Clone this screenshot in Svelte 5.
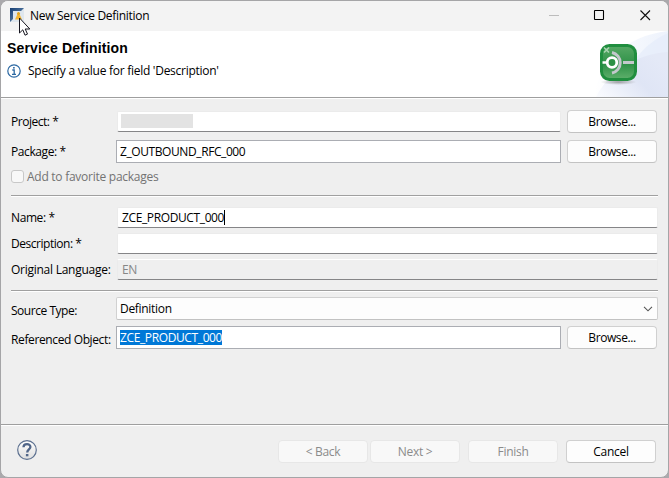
<script>
  const actions = [
    { label: '< Back', disabled: true, gap: 0 },
    { label: 'Next >', disabled: true, gap: 2 },
    { label: 'Finish', disabled: true, gap: 8 },
    { label: 'Cancel', disabled: false, gap: 8 }
  ];
</script>

<div class="desktop">
  <div class="window">
    <header class="titlebar">
      <svg class="appicon" width="14" height="14" viewBox="0 0 14 14">
        <defs>
          <linearGradient id="blue" x1="0" y1="0" x2="1" y2="1">
            <stop offset="0" stop-color="#173f73" /><stop offset="1" stop-color="#7597bb" />
          </linearGradient>
        </defs>
        <rect width="14" height="14" fill="#dfe7ee" />
        <path d="M0 0H14L11 3H3V11L0 14Z" fill="url(#blue)" />
        <path d="M8.5 4 5 11.5H12Z" fill="#f5b735" />
        <circle cx="8.5" cy="5.5" r="1.5" fill="#e5a51f" />
      </svg>
      <span class="title">New Service Definition</span>
      <svg class="controls" width="130" height="30" viewBox="0 0 130 30">
        <path d="M11 14.5h10" stroke="#bcbcbc" fill="none" />
        <rect x="56.5" y="9.5" width="9" height="9" rx="0.5" fill="none" stroke="#000" stroke-width="1.1" />
        <path d="m102.5 9.5 9.5 9.5m0-9.5-9.5 9.5" stroke="#111" stroke-width="1.1" fill="none" />
      </svg>
      <svg class="cursor" width="14" height="20" viewBox="0 0 14 20">
        <path d="M2.5 1v15l3.3-3.2 2.2 5.4 2.5-1.1-2.3-5.1h4.6Z" fill="#fff" stroke="#161620" />
      </svg>
    </header>

    <section class="banner">
      <svg class="swoosh" width="74" height="66" viewBox="0 0 74 66">
        <defs>
          <linearGradient id="sw" x1="0" x2="1"><stop offset="0" stop-color="#fff" /><stop offset="1" stop-color="#edf2fc" /></linearGradient>
          <linearGradient id="sw2" x1="0" x2="1" y1="1" y2=".4"><stop offset="0" stop-color="#fbfcff" /><stop offset=".6" stop-color="#dfe5f5" /><stop offset="1" stop-color="#e4e9f7" /></linearGradient>
        </defs>
        <path d="M0 66C5 32 30 5 74 0V66Z" fill="url(#sw)" />
        <path d="M28 66C30 40 46 14 74 2V66Z" fill="#e3ebfa" opacity=".65" />
        <path d="M2 66C14 42 41 23 74 21V66Z" fill="url(#sw2)" />
      </svg>
      <svg class="badge" width="40" height="44" viewBox="-.5 -.5 40 44">
        <defs>
          <linearGradient id="green" x1="0" y1="0" x2="0" y2="1">
            <stop offset="0" stop-color="#57a965" /><stop offset=".55" stop-color="#2f9148" /><stop offset="1" stop-color="#5fb06c" />
          </linearGradient>
          <radialGradient id="shade"><stop offset="0" stop-color="#777" stop-opacity=".7" /><stop offset="1" stop-color="#888" stop-opacity="0" /></radialGradient>
        </defs>
        <ellipse cx="19" cy="38.5" rx="18" ry="3" fill="url(#shade)" />
        <rect x="2" y="2" width="34" height="34" rx="8" fill="url(#green)" stroke="#208e3f" stroke-width="3" />
        <path d="M12.5 9A10.5 10.5 0 0 1 12.5 29.5M23.5 19H34.5" fill="none" stroke="#c3c8cc" stroke-width="3" />
        <path d="M3 19h5" stroke="#fff" stroke-width="2.5" />
        <circle cx="12.5" cy="19" r="4.8" fill="#2d9145" stroke="#fff" stroke-width="2.8" />
        <path d="m4.5 4 5 5m0-5-5 5" stroke="#a9d3b1" stroke-width="1.6" />
      </svg>
      <h1>Service Definition</h1>
      <p>
        <svg width="14" height="14" viewBox="0 0 14 14">
          <circle cx="7" cy="7" r="6.2" fill="#fff" stroke="#2b68a2" stroke-width="1.2" />
          <path d="M5.3 6h1.9v4.2M5 10.4h4" fill="none" stroke="#2b68a2" stroke-width="1.3" />
          <rect x="6.1" y="3" width="1.6" height="1.6" fill="#2b68a2" />
        </svg>
        <span class="hint">Specify a value for field 'Description'</span>
      </p>
    </section>

    <main>
      <div class="row project">
        <span class="label tight">Project: *</span>
        <div class="field flat"><i class="redacted"></i></div>
        <div class="button">Browse...</div>
      </div>
      <div class="row package">
        <span class="label">Package: *</span>
        <div class="field boxed"><span class="pkg">Z_OUTBOUND_RFC_000</span></div>
        <div class="button">Browse...</div>
      </div>
      <div class="favorite"><i class="check"></i><span>Add to favorite packages</span></div>
      <div class="rule"></div>
      <div class="row name">
        <span class="label">Name: *</span>
        <div class="field flat"><span class="zce">ZCE_PRODUCT_000</span><i class="caret"></i></div>
      </div>
      <div class="row">
        <span class="label tight">Description: *</span>
        <div class="field flat"></div>
      </div>
      <div class="row">
        <span class="label language">Original Language:</span>
        <div class="field flat readonly"><span>EN</span></div>
      </div>
      <div class="rule second"></div>
      <div class="row source">
        <span class="label low tight">Source Type:</span>
        <div class="field combo">
          <span class="choice">Definition</span>
          <svg width="10" height="6" viewBox="0 0 10 6"><path d="m1 .8 4 4 4-4" fill="none" stroke="#555" stroke-width="1.1" /></svg>
        </div>
      </div>
      <div class="row ref">
        <span class="label low object">Referenced Object:</span>
        <div class="field boxed"><span class="zce selected">ZCE_PRODUCT_000</span></div>
        <div class="button">Browse...</div>
      </div>
    </main>

    <footer>
      <svg class="help" width="20" height="20" viewBox="0 0 20 20">
        <defs><linearGradient id="hg" x1="0" y1="0" x2="0" y2="1"><stop offset="0" stop-color="#fff" /><stop offset="1" stop-color="#dedede" /></linearGradient></defs>
        <circle cx="10" cy="10" r="9.3" fill="url(#hg)" stroke="#5c7090" stroke-width="1.2" />
        <path d="M6.5 7.2C6.5 3 13.6 3.2 13.4 7c-.1 2.3-3.2 2.6-3.2 5.4" fill="none" stroke="#516689" stroke-width="2.3" />
        <rect x="8.9" y="14" width="2.5" height="2.3" fill="#516689" />
      </svg>
      <div class="actions">
        {#each actions as a}
          <div class="button" class:disabled={a.disabled} style:margin-left="{a.gap}px">{a.label}</div>
        {/each}
      </div>
    </footer>
  </div>
</div>

<style>
  :global(body) { margin: 0; overflow: hidden; }
  .desktop { width: 669px; height: 478px; background: #aaa9ac; }
  .window {
    box-sizing: border-box; width: 669px; height: 478px; overflow: hidden;
    border: 1px solid #a5a5a7; border-radius: 8px; background: #efefef;
    display: flex; flex-direction: column; color: #000;
    font: 12px/16px "Open Sans", "Noto Sans", sans-serif; letter-spacing: -0.3px; white-space: nowrap;
  }
  .titlebar { position: relative; height: 30px; flex: none; display: flex; background: #f3f3f3; }
  .appicon { margin: 7px 0 0 9px; }
  .title { margin: 7px 0 0 6px; }
  .controls { margin-left: auto; }
  .cursor { position: absolute; left: 16px; top: 16px; z-index: 2; }
  .banner { position: relative; height: 66px; flex: none; background: #fff; border-bottom: 1px solid #9f9f9f; box-shadow: 0 1px #fff; }
  .swoosh { position: absolute; right: 0; top: 0; }
  .badge { position: absolute; right: 29px; top: 12px; }
  h1 { margin: 0; padding: 9px 0 0 6px; font: bold 14px/16px "Liberation Sans", Arial, sans-serif; letter-spacing: 0.15px; }
  .banner p { display: flex; gap: 7px; margin: 7px 0 0 6px; align-items: center; height: 16px; }
  .hint { letter-spacing: -0.27px; }
  main { flex: none; height: 326px; box-sizing: border-box; padding: 12px 10px 0; display: flex; flex-direction: column; }
  .row { display: flex; align-items: center; height: 23px; flex: none; margin-bottom: 3px; }
  .label { width: 105px; flex: none; line-height: 16px; letter-spacing: -0.4px; }
  .tight { letter-spacing: -0.47px; }
  .language { letter-spacing: -0.26px; }
  .object { letter-spacing: -0.38px; }
  .low { padding-top: 5px; }
  .field { box-sizing: border-box; flex: 1; height: 23px; display: flex; align-items: center; }
  .flat { height: 21px; margin: 0 0 0 1px; padding-left: 4px; background: #fff; border: 1px solid #ebebeb; border-bottom-color: #858587; border-radius: 2px; }
  .boxed { padding-left: 3px; background: #fff; border: 1px solid #abadb3; }
  .pkg { letter-spacing: -0.41px; }
  .zce { letter-spacing: -0.38px; }
  .readonly { background: #efefef; border-top-color: #fff; color: #878787; }
  .button {
    box-sizing: border-box; width: 90px; height: 23px; flex: none; border: 1px solid #d0d0d0;
    border-bottom-color: #c3c3c3; border-radius: 4px; background: #fdfdfd; line-height: 22px; text-align: center;
  }
  .row .button { margin-left: 6px; margin-right: 1px; letter-spacing: -0.42px; }
  .project { margin-bottom: 7px; }
  .redacted { width: 72px; height: 14px; margin-top: -1px; margin-left: -1px; background: #e3e3e3; }
  .package { margin-bottom: 5px; }
  .favorite { height: 17px; display: flex; align-items: center; gap: 3px; color: #737373; letter-spacing: -0.26px; }
  .check { box-sizing: border-box; width: 13px; height: 13px; border: 1px solid #c8c8c8; border-radius: 3px; background: #f8f8f8; }
  .rule { height: 1px; flex: none; background: #a0a0a0; box-shadow: 0 1px #fff; margin: 10px 0; }
  .rule.second { margin: 6px 0 6px; }
  .caret { width: 1px; height: 15px; background: #000; }
  .combo { padding: 0 4px 0 3px; justify-content: space-between; background: #fdfdfd; border: 1px solid #d1d1d1; border-bottom-color: #c2c2c2; border-radius: 2px; }
  .source { margin-bottom: 6px; }
  .selected { color: #fff; background: #0078d7; line-height: 15px; }
  footer { flex: 1; display: flex; justify-content: space-between; padding: 15px 12px 0 16px; border-top: 1px solid #9f9f9f; box-shadow: inset 0 1px #fff; }
  .actions { display: flex; }
  .disabled { color: #8b8b8b; border-color: #e7e7e7; background: #f8f8f8; }
</style>
